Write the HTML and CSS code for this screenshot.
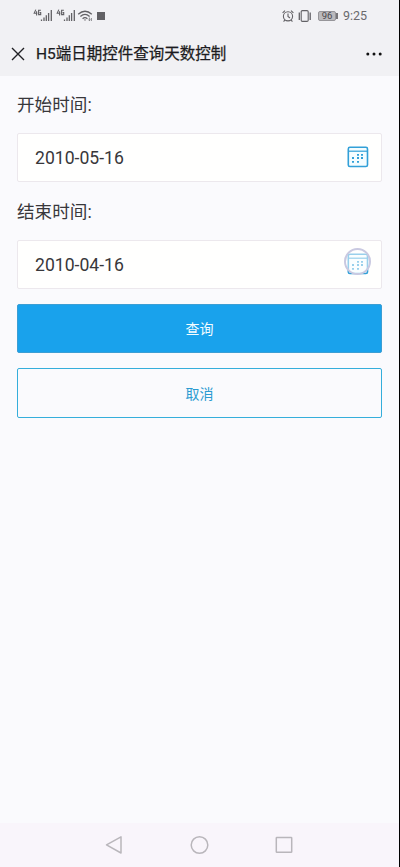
FILE: index.html
```html
<!DOCTYPE html>
<html lang="zh-CN">
<head>
<meta charset="utf-8">
<meta name="viewport" content="width=device-width, initial-scale=1">
<title>H5端日期控件查询天数控制</title>
<link rel="stylesheet" href="styles.css">
</head>
<body>
<div class="screen">
  <div class="status">
    <svg class="signals" width="74" height="16" viewBox="0 0 74 16" fill="none" stroke="#626165">
      <g id="signal">
        <path d="M2.8 1.6L1.2 5.2H4.4M3.6 3.2V7.4" stroke-width="1.1"/>
        <path d="M7.9 2.3H5.6V6.6H7.7V4.6H6.6" stroke-width="1.1"/>
        <path d="M8.5 13V11.4M11 13V9.6M13.3 13V7.3M15.6 13V5M18.3 13V2" stroke-width="1.3"/>
      </g>
      <use href="#signal" x="23"/>
      <path d="M45.2 6.2Q52 .2 58.8 6.2M47.4 8.4Q52 4.3 56.6 8.4M49.6 10.7Q52 8.6 54.4 10.7" stroke-width="1.3"/>
      <path d="M51 11.6H53L52 13Z" fill="#626165" stroke="none"/>
      <path d="M56.4 9.5V12.5M55.4 11.6L56.4 12.7L57.4 11.6M58.4 13V10" stroke-width=".7"/>
      <path d="M64 4H72V12H64Z" fill="#626165" stroke="none"/>
    </svg>
    <div class="status-right">
      <svg width="30" height="14" viewBox="0 0 30 14" fill="none" stroke="#626165" stroke-width="1.1">
        <circle cx="6" cy="7.3" r="4.6"/>
        <path d="M6 4.5V7.5L8 9M.6 3.8L3 1.6M9 1.6L11.4 3.8M2.8 11L1.6 12.6M9.2 11L10.4 12.6"/>
        <rect x="19.2" y="1.6" width="7" height="10.8" rx="1.2"/>
        <path d="M17.3 3.5V11M28.2 3.5V11" stroke-width="1.3"/>
      </svg>
      <span class="battery">96</span>
      <span class="clock">9:25</span>
    </div>
  </div>
  <header class="titlebar">
    <svg class="close" width="14" height="14" viewBox="0 0 14 14" fill="none" stroke="#202024" stroke-width="1.4"><path d="M1 1L13 13M13 1L1 13"/></svg>
    <h1>H5端日期控件查询天数控制</h1>
    <svg class="more" width="16" height="4" viewBox="0 0 16 4" fill="#111"><circle cx="1.8" cy="2" r="1.5"/><circle cx="8" cy="2" r="1.5"/><circle cx="14.2" cy="2" r="1.5"/></svg>
  </header>
  <main>
    <div class="label">开始时间:</div>
    <div class="field">
      <span>2010-05-16</span>
      <svg class="calendar" width="22" height="22" viewBox="0 0 22 22" fill="none" stroke="#32a0d8">
        <rect x="1.3" y="1.3" width="19.2" height="19.2" rx="1.6" fill="#f5fdff" stroke-width="1.6"/>
        <path d="M1.5 5.2H20.3" stroke-width="1.2"/>
        <path d="M10 8.8h2M14 8.8h2M5 12h2M10 12h2M14 12h2M5 15.8h2M10 15.8h2" stroke-width="1.8"/>
      </svg>
    </div>
    <div class="label">结束时间:</div>
    <div class="field">
      <span>2010-04-16</span>
      <div class="calendar touched">
        <svg width="22" height="22" viewBox="0 0 22 22" fill="none" stroke="#32a0d8">
          <rect x="1.3" y="1.3" width="19.2" height="19.2" rx="1.6" fill="#f5fdff" stroke-width="1.6"/>
          <path d="M1.5 5.2H20.3" stroke-width="1.2"/>
          <path d="M10 8.8h2M14 8.8h2M5 12h2M10 12h2M14 12h2M5 15.8h2M10 15.8h2" stroke-width="1.8"/>
        </svg>
        <span class="touch"></span>
      </div>
    </div>
    <div class="button primary">查询</div>
    <div class="button outline">取消</div>
  </main>
  <nav class="navbar">
    <svg width="18" height="20" viewBox="0 0 18 20" fill="none" stroke="#b9b6bb" stroke-width="1.5" stroke-linejoin="round"><path d="M16 1.8V18L1.5 9.9Z"/></svg>
    <svg width="20" height="20" viewBox="0 0 20 20" fill="none" stroke="#b9b6bb" stroke-width="1.5"><circle cx="10.5" cy="10" r="8.3"/></svg>
    <svg width="18" height="18" viewBox="0 0 18 18" fill="none" stroke="#b9b6bb" stroke-width="1.5"><rect x="1.3" y="1.5" width="15.4" height="14.8" rx=".6"/></svg>
  </nav>
</div>
</body>
</html>
```
FILE: styles.css
```css
* { box-sizing: border-box; }
body {
  margin: 0;
  font-family: Roboto, "Noto Sans CJK SC", sans-serif;
  color: #38373b;
}
.screen {
  display: flex;
  flex-direction: column;
  width: 400px;
  height: 867px;
  border-right: 1px solid #000;
  background: #fafafd;
}
.status {
  display: flex;
  align-items: center;
  justify-content: space-between;
  height: 32px;
  padding: 0 32px 0 33px;
  background: #f1f1f4;
}
.status-right { display: flex; align-items: center; }
.battery {
  position: relative;
  width: 18px;
  height: 10px;
  margin-left: 6px;
  border: 1px solid #969599;
  border-radius: 2px;
  background: #bbbabd;
  color: #4a494d;
  font-size: 9.5px;
  line-height: 8px;
  text-align: center;
}
.battery::after {
  content: "";
  position: absolute;
  top: 1px;
  right: -3px;
  width: 2px;
  height: 6px;
  background: #77767a;
}
.clock {
  width: 24px;
  margin-left: 7px;
  color: #6a696d;
  font-size: 12.5px;
  line-height: 16px;
}
.titlebar {
  display: flex;
  align-items: center;
  height: 44px;
  padding: 0 17px 0 11px;
  background: #f1f1f4;
}
.titlebar h1 {
  margin: 0 0 0 11px;
  color: #1c1c20;
  font-size: 15.5px;
  font-weight: 400;
  line-height: 24px;
  white-space: nowrap;
  -webkit-text-stroke: .25px #1c1c20;
}
.more { margin-left: auto; }
main { flex: 1; padding: 0 17px; }
.label {
  height: 58px;
  padding-top: 18px;
  font-size: 17.6px;
  line-height: 24px;
}
.label:first-child { height: 57px; padding-top: 17px; }
.field {
  display: flex;
  align-items: center;
  justify-content: space-between;
  height: 49px;
  padding: 0 12px 0 17px;
  border: 1px solid #ece8ed;
  border-radius: 2px;
  background: #fffffe;
  font-size: 17.6px;
}
.calendar { margin-top: -2px; }
.touched { position: relative; width: 22px; height: 22px; }
.touched svg { display: block; }
.touch {
  position: absolute;
  top: -5px;
  left: -3px;
  width: 27px;
  height: 27px;
  border: 2px solid #c9c9e1;
  border-radius: 50%;
  background: rgba(255, 255, 255, .5);
}
.button {
  display: flex;
  align-items: center;
  justify-content: center;
  height: 49px;
  margin-top: 15px;
  padding-bottom: 1px;
  border: 1px solid #3b9ed4;
  border-radius: 2px;
  font-size: 14px;
}
.primary { background: #19a2ec; color: #f4fcff; }
.outline { height: 50px; border: 1.5px solid #35aedb; color: #2b9bd1; }
.navbar {
  display: flex;
  align-items: center;
  justify-content: space-between;
  height: 44px;
  padding: 0 106px 0 105px;
  background: #f9f5fb;
}
```
